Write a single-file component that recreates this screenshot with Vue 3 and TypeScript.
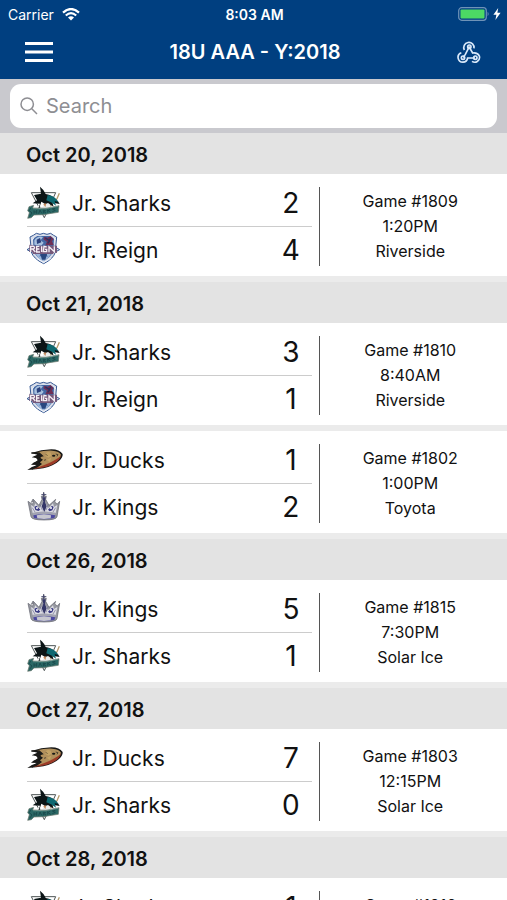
<script setup lang="ts">
import { ref, computed } from 'vue'

type Team = 'Sharks' | 'Reign' | 'Ducks' | 'Kings'

interface Side {
  team: Team
  score: number
}

interface Game {
  id: number
  time: string
  rink: string
  sides: [Side, Side]
}

interface Day {
  date: string
  games: Game[]
}

const query = ref('')

const side = (team: Team, score: number): Side => ({ team, score })

const days: Day[] = [
  {
    date: 'Oct 20, 2018',
    games: [{ id: 1809, time: '1:20PM', rink: 'Riverside', sides: [side('Sharks', 2), side('Reign', 4)] }],
  },
  {
    date: 'Oct 21, 2018',
    games: [
      { id: 1810, time: '8:40AM', rink: 'Riverside', sides: [side('Sharks', 3), side('Reign', 1)] },
      { id: 1802, time: '1:00PM', rink: 'Toyota', sides: [side('Ducks', 1), side('Kings', 2)] },
    ],
  },
  {
    date: 'Oct 26, 2018',
    games: [{ id: 1815, time: '7:30PM', rink: 'Solar Ice', sides: [side('Kings', 5), side('Sharks', 1)] }],
  },
  {
    date: 'Oct 27, 2018',
    games: [{ id: 1803, time: '12:15PM', rink: 'Solar Ice', sides: [side('Ducks', 7), side('Sharks', 0)] }],
  },
  {
    date: 'Oct 28, 2018',
    games: [{ id: 1816, time: '9:00AM', rink: 'Solar Ice', sides: [side('Sharks', 1), side('Kings', 3)] }],
  },
]

const visibleDays = computed<Day[]>(() => {
  const q = query.value.trim().toLowerCase()
  if (!q) return days
  return days
    .map((d) => ({
      date: d.date,
      games: d.games.filter((g) =>
        `${g.id} ${g.rink} ${g.sides.map((s) => s.team).join(' ')}`.toLowerCase().includes(q),
      ),
    }))
    .filter((d) => d.games.length > 0)
})
</script>

<template>
  <div class="app">
    <header class="top">
      <div class="status">
        <div class="carrier">
          <span>Carrier</span>
          <svg class="wifi" viewBox="0 0 18 13" aria-hidden="true">
            <path d="M1 4.6 Q9 -2.6 17 4.6" />
            <path d="M3.8 7.5 Q9 2.9 14.2 7.5" />
            <path class="solid" d="M6 9.5 Q9 7 12 9.5 L9 12.6 Z" />
          </svg>
        </div>
        <span class="clock">8:03 AM</span>
        <div class="power">
          <svg class="battery" viewBox="0 0 32 14" aria-hidden="true">
            <rect class="shell" x="0.7" y="0.7" width="27.6" height="12.6" rx="3" />
            <rect class="charge" x="2.5" y="2.5" width="24" height="9" rx="1" />
            <path class="cap" d="M29.6 4.8 Q31.6 7 29.6 9.2 Z" />
          </svg>
          <svg class="bolt" viewBox="0 0 8 12" aria-hidden="true">
            <path d="M5.2 0 L0.4 6.8 H3.4 L2.4 12 L7.6 4.8 H4.4 Z" />
          </svg>
        </div>
      </div>
      <nav class="nav">
        <button class="icon-btn menu" type="button" aria-label="Menu">
          <svg viewBox="0 0 28 20" aria-hidden="true">
            <path d="M0 1.5 H28 M0 10 H28 M0 18.5 H28" />
          </svg>
        </button>
        <h1>18U AAA - Y:2018</h1>
        <button class="icon-btn hook" type="button" aria-label="Connections">
          <svg viewBox="0 0 72 69" aria-hidden="true">
            <path d="M22 27 A15.500 15.500 0 1 1 51 22" />
            <path d="M37 17 L25 40 Q22 45 18 49" />
            <path d="M36 17 L47 36 Q62 34 67 45 A14.500 14.500 0 0 1 45 61" />
            <path d="M13 35 A14.500 14.500 0 1 0 32 51 H54" />
            <circle cx="37" cy="17" r="5" />
            <circle cx="18" cy="50" r="5" />
            <circle cx="55" cy="50" r="5" />
          </svg>
        </button>
      </nav>
    </header>

    <div class="search-bar">
      <label class="search">
        <svg viewBox="0 0 18 18" aria-hidden="true">
          <circle cx="7.200" cy="7.200" r="6.200" />
          <path d="M11.800 11.800 L17 17" />
        </svg>
        <input v-model="query" type="search" placeholder="Search" aria-label="Search" />
      </label>
    </div>

    <main class="list">
      <section v-for="day in visibleDays" :key="day.date">
        <h2>{{ day.date }}</h2>
        <article v-for="game in day.games" :key="game.id" class="game">
          <div class="teams">
            <div v-for="s in game.sides" :key="s.team" class="team">
              <svg v-if="s.team === 'Sharks'" class="logo" viewBox="36 15 108 108" aria-hidden="true">
                <path d="M49 38 L122 38 L88 113 Z" fill="#fff" stroke="#4d5454" stroke-width="3" />
                <path d="M133 40 L126 56 L100 86" fill="none" stroke="#b59a6c" stroke-width="4" />
                <path d="M66 78 L100 66 L108 82 L88 106 Z" fill="#e9eded" />
                <path d="M57 45 L78 41 L75 20 Q87 29 92 42 Q112 45 129 64 L134 72 L112 68 L116 80 L99 69 L86 74 L70 86 L75 71 L53 70 L66 61 Z" fill="#0b1416" />
                <path d="M98 45 Q121 48 130 66 L119 63 L123 77 L108 67 L94 61 Z" fill="#0d6870" />
                <path d="M79 65 L89 71 L82 82 L74 80 Z" fill="#fff" />
                <path d="M85 72 L94 70 L91 82 Z" fill="#c4895b" />
                <path d="M42 80 L56 76 L53 84 Q92 89 132 77 L130 97 L103 101 L87 104 L57 105 L49 113 L38 115 L43 98 L38 92 Z" fill="#2b6865" stroke="#6d776d" stroke-width="2" />
                <path d="M47 84 L43 92 L51 99 L44 109 M57 91 V101 M57 96 H65 M65 90 V101 M71 101 L75 90 L80 100 M85 100 V90 L92 92 L86 95 L93 99 M98 88 V98 M106 87 L99 92 L107 97 M121 85 L112 87 L121 91 L112 95" fill="none" stroke="#1c4c4e" stroke-width="3" />
                <path d="M54 86 Q93 90 130 79" fill="none" stroke="#7fa097" stroke-width="1.500" />
              </svg>

              <svg v-else-if="s.team === 'Reign'" class="logo" viewBox="36 156 108 108" aria-hidden="true">
                <path d="M45 171 Q56 166 64 160 L75 163 L85 160 L96 163 L107 160 Q115 166 125 171 L122 202 L134 209 L121 216 Q116 236 86 251 Q55 236 49 216 L36 209 L48 202 Z" fill="#d9deea" stroke="#375994" stroke-width="3" />
                <path d="M54 176 L67 168 L105 168 L117 176 L115 214 Q107 232 86 243 Q63 232 56 214 Z" fill="#4367a3" />
                <path d="M58 181 Q68 166 84 171 L77 181 L86 188 L79 197 L58 194 Z" fill="#a8c0de" />
                <path d="M65 179 L75 174 L79 187 L66 192 Z" fill="#2b407d" />
                <path d="M88 170 L98 173 L107 168 L116 177 L111 184 L116 195 L91 196 L96 185 L85 178 Z" fill="#702f55" />
                <path d="M91 174 L104 182 L98 190 M108 174 L102 181" stroke="#263364" stroke-width="4" fill="none" />
                <path d="M62 221 L78 218 L73 230 L86 225 L98 231 L94 219 L110 219 Q102 234 86 244 Q69 236 62 221 Z" fill="#9db7db" />
                <path d="M76 223 L86 218 L96 223 L91 239 H81 Z" fill="#29477f" />
                <path d="M43 194 L59 197 H126 V219 L117 217 L114 222 H55 L51 216 H43 Z" fill="#75587a" />
                <path d="M47 216 V199 H56 Q61 203 56 207 H48 M54 208 L61 216 M73 199 H65 V216 H75 M66 207 H73 M80 199 V216 M95 201 L87 199 L85 215 H95 V208 H90 M102 217 V200 L118 215 V199" fill="none" stroke="#f5eff5" stroke-width="4" />
                <path d="M50 180 L57 175 M117 174 L122 180 M65 235 L86 248 L107 235" stroke="#f0f4fb" stroke-width="3" fill="none" />
              </svg>

              <svg v-else-if="s.team === 'Ducks'" class="logo" viewBox="35 20 108 108" aria-hidden="true">
                <path d="M48 53 Q78 42 108 42 Q133 42 142 56 Q143 66 131 77 Q115 92 84 99 Q64 102 36 104 Q48 93 67 89 L47 88 Q53 80 68 76 L63 68 L49 66 L66 58 Z" fill="#171716" />
                <path d="M64 51 Q87 45 111 46 Q132 47 137 58 Q134 71 116 83 Q95 95 65 97 L79 87 L74 81 L83 73 L75 68 L81 60 L73 55 Z" fill="#b1905c" />
                <path d="M138 60 Q133 78 107 90 Q83 100 50 101 Q89 91 112 78 Q132 67 138 60 Z" fill="#9d3b27" />
                <path d="M48 53 L71 53 L80 61 L62 65 L74 72 L62 82 L74 86 L49 101" fill="none" stroke="#1b1b19" stroke-width="5" />
                <path d="M93 52 Q98 48 106 52 L108 61 L99 67 L90 62 Z M94 73 L108 67 L103 80 Z" fill="#c4a365" />
                <ellipse cx="115" cy="61" rx="5" ry="3" fill="#171816" />
                <path d="M121 56 L128 58 L125 63 M92 57 L96 61 M86 75 L92 73" fill="none" stroke="#514530" stroke-width="3" />
              </svg>

              <svg v-else class="logo" viewBox="36 159 108 108" aria-hidden="true">
                <path d="M39 196 L52 205 L57 194 L49 199 L54 189 L72 208 L81 190 L79 181 H84 L86 169 L89 181 H94 L92 190 L102 208 L122 190 L119 198 L127 204 L134 196 L126 242 Q124 252 87 252 Q50 252 48 242 Z" fill="#9799a1" stroke="#60626d" stroke-width="2" />
                <path d="M48 207 L57 213 L61 202 L73 216 L82 205 L87 192 L93 205 L101 216 L114 202 L117 213 L127 207 L122 231 Q87 223 53 231 Z" fill="#dddde4" />
                <path d="M82 184 L92 184 L90 198 L95 211 L88 229 L80 211 L85 197 Z" fill="#343668" />
                <path d="M58 212 L65 209 L76 221 L70 225 L61 222 Z M99 221 L111 209 L116 213 L112 223 L104 226 Z" fill="#3a3a83" />
                <path d="M52 215 L60 228 M122 215 L114 228 M75 205 L82 223 M100 205 L93 223" stroke="#6d6d91" stroke-width="2" />
                <path d="M53 231 Q87 222 122 231 L120 240 Q87 234 55 240 Z" fill="#a2a3b2" />
                <path d="M55 238 Q87 231 121 238 L118 246 Q87 253 57 246 Z" fill="#4b48a0" />
                <path d="M65 238 L87 235 L108 238 L107 247 L87 249 L67 247 Z" fill="#c7c7cf" />
                <circle cx="66" cy="216" r="3" fill="#fff" />
                <circle cx="108" cy="216" r="3" fill="#fff" />
                <path d="M79 176 H94 M86 169 V183" stroke="#46496b" stroke-width="3" />
              </svg>
              <span class="name">Jr. {{ s.team }}</span>
              <span class="score">{{ s.score }}</span>
            </div>
          </div>
          <div class="info">
            <span>Game #{{ game.id }}</span>
            <span>{{ game.time }}</span>
            <span>{{ game.rink }}</span>
          </div>
        </article>
      </section>
    </main>
  </div>
</template>

<style>
body {
  margin: 0;
}
</style>

<style scoped>
.app {
  display: flex;
  flex-direction: column;
  height: 100vh;
  overflow: hidden;
  background: #ebebeb;
  color: #111;
  font-family: Inter, "Liberation Sans", sans-serif;
}
.top {
  flex: none;
  background: #003f80;
  color: #fff;
}
.status {
  display: grid;
  grid-template-columns: 1fr auto 1fr;
  align-items: center;
  height: 28px;
  padding: 0 6px 0 8px;
  font-size: 14px;
}
.carrier,
.power {
  display: flex;
  align-items: center;
  gap: 8px;
}
.power {
  justify-content: flex-end;
  gap: 3px;
}
.wifi {
  width: 18px;
  height: 13px;
  fill: none;
  stroke: #fff;
  stroke-width: 2.2;
}
.wifi .solid {
  fill: #fff;
  stroke: none;
}
.clock {
  font-weight: 600;
}
.battery {
  width: 32px;
  height: 14px;
}
.shell {
  fill: none;
  stroke: #6f93b8;
  stroke-width: 1.2;
}
.charge {
  fill: #4cd964;
}
.cap {
  fill: #6f93b8;
}
.bolt {
  width: 8px;
  height: 12px;
  fill: #fff;
}
.nav {
  display: grid;
  grid-template-columns: 28px 1fr 24px;
  align-items: center;
  height: 48px;
  padding: 0 26px 3px 25px;
}
.icon-btn {
  display: flex;
  padding: 0;
  border: 0;
  background: none;
  cursor: pointer;
}
.icon-btn svg {
  width: 100%;
  fill: none;
  stroke: #fff;
}
.menu svg {
  height: 20px;
  stroke-width: 3;
}
.hook svg {
  height: 23px;
  stroke: #d9e9fa;
  stroke-width: 5;
}
h1 {
  margin: 0;
  font-size: 20px;
  font-weight: 600;
  line-height: 24px;
  text-align: center;
}
.search-bar {
  flex: none;
  padding: 5px 10px;
  background: #c9c9ce;
}
.search {
  display: flex;
  align-items: center;
  gap: 8px;
  height: 44px;
  padding: 0 10px;
  border-radius: 11px;
  background: #fff;
}
.search svg {
  flex: none;
  width: 18px;
  height: 18px;
  fill: none;
  stroke: #8e8e93;
  stroke-width: 1.5;
}
.search input {
  flex: 1;
  min-width: 0;
  padding: 0;
  border: 0;
  outline: 0;
  background: none;
  color: #111;
  font: inherit;
  font-size: 20px;
  appearance: none;
}
.search input::placeholder {
  color: #8e8e93;
  opacity: 1;
}
.list {
  flex: 1;
  min-height: 0;
  overflow-y: auto;
  scrollbar-width: none;
}
h2 {
  margin: 0;
  padding: 3px 26px 0;
  background: #e3e3e3;
  font-size: 20px;
  font-weight: 600;
  line-height: 38px;
}
.game {
  display: grid;
  grid-template-columns: 63fr 37fr;
  padding: 6px 0 3px;
  border-bottom: 6px solid #ebebeb;
  background: #fff;
}
.teams {
  padding: 0 7px 0 27px;
}
.team {
  display: flex;
  align-items: center;
  height: 46px;
}
.team + .team {
  border-top: 1px solid #ccc;
}
.logo {
  flex: none;
  width: 36px;
  height: 36px;
}
.name {
  flex: 1;
  margin-left: 9px;
  font-size: 21px;
}
.score {
  width: 43px;
  font-size: 28px;
  text-align: center;
}
.info {
  display: flex;
  flex-direction: column;
  align-self: center;
  padding: 2px 7px 2px 0;
  border-left: 1px solid #555;
  font-size: 16px;
  line-height: 25px;
  text-align: center;
}
</style>
